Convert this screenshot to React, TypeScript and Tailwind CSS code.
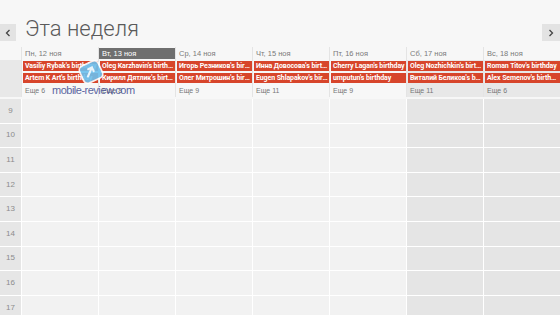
const days = [
  { label: 'Пн, 12 ноя', events: ["Vasiliy Rybak's birthday", "Artem K Art's birthday"], more: 'Еще 6' },
  { label: 'Вт, 13 ноя', events: ["Oleg Karzhavin's birthday", "Кирилл Дятлик's birthday"], more: 'Еще 8', today: true },
  { label: 'Ср, 14 ноя', events: ["Игорь Резников's birthday", "Олег Митрошин's birthday"], more: 'Еще 9' },
  { label: 'Чт, 15 ноя', events: ["Инна Довосова's birthday", "Eugen Shlapakov's birthday"], more: 'Еще 11' },
  { label: 'Пт, 16 ноя', events: ["Cherry Lagan's birthday", "umputun's birthday"], more: 'Еще 9' },
  { label: 'Сб, 17 ноя', events: ["Oleg Nozhichkin's birthday", "Виталий Беликов's birthday"], more: 'Еще 11', weekend: true },
  { label: 'Вс, 18 ноя', events: ["Roman Titov's birthday", "Alex Semenov's birthday"], more: 'Еще 6', weekend: true },
]

const hours = [9, 10, 11, 12, 13, 14, 15, 16, 17]

const sans = "font-['Liberation_Sans',Arial,sans-serif]"

export default function App() {
  return (
    <div className={`relative w-[560px] h-[315px] overflow-hidden bg-[#f7f7f7] ${sans}`}>
      {/* title bar */}
      <div className="h-[47px] flex items-start">
        <button className="mt-[24px] w-[16px] h-[17px] bg-[#e3e3e3] flex items-center justify-center">
          <svg width="6" height="8" viewBox="0 0 6 8">
            <polyline points="4.5,1 1.5,4 4.5,7" fill="none" stroke="#444" strokeWidth="1.3" />
          </svg>
        </button>
        <h1 className="ml-[9px] mt-[15px] text-[22px] leading-[28px] font-light text-[#5a5a5a] font-['Roboto','Open_Sans',sans-serif]">
          Эта неделя
        </h1>
        <button className="ml-auto mt-[24px] w-[18px] h-[17px] bg-[#e3e3e3] flex items-center justify-center">
          <svg width="6" height="8" viewBox="0 0 6 8">
            <polyline points="1.5,1 4.5,4 1.5,7" fill="none" stroke="#444" strokeWidth="1.3" />
          </svg>
        </button>
      </div>

      {/* day headers + all-day events */}
      <div className="grid grid-cols-[21px_repeat(7,minmax(0,1fr))] gap-x-px bg-[#e4e4e4]">
        <div className="h-[13px] bg-[#f7f7f7]" />
        {days.map((d) => (
          <div key={d.label} className="h-[13px] bg-[#f7f7f7] pt-px">
            <div
              className={`h-[11px] pl-[3px] text-[7.5px] leading-[11px] whitespace-nowrap ${
                d.today ? 'bg-[#6f6f6f] text-white' : 'text-[#7a7a7a]'
              }`}
            >
              {d.label}
            </div>
          </div>
        ))}

        <div className="h-[37px] bg-[#e8e8e8]" />
        {days.map((d) => (
          <div
            key={d.label + 'e'}
            className={`h-[37px] min-w-0 pt-px pl-px flex flex-col gap-[2px] ${d.weekend ? 'bg-[#e8e8e8]' : 'bg-[#f7f7f7]'}`}
          >
            {d.events.map((e) => (
              <div
                key={e}
                className="h-[11px] bg-[#d7452b] text-white font-bold text-[7px] tracking-[-0.1px] leading-[11px] pl-[2px] pr-px truncate font-['Roboto',Arial,sans-serif]"
              >
                {e}
              </div>
            ))}
            <div className="pl-[2px] text-[7px] leading-[12px] text-[#777] whitespace-nowrap">{d.more}</div>
          </div>
        ))}
      </div>

      {/* hour grid */}
      <div className="mt-[2px] grid grid-cols-[21px_repeat(7,minmax(0,1fr))] gap-px bg-white">
        {hours.map((h) => (
          <div key={h} className="contents">
            <div className="h-[23.6px] bg-[#e6e6e6] flex items-center justify-center text-[8px] text-[#8c8c8c]">
              {h}
            </div>
            {days.map((d) => (
              <div key={d.label + h} className={`h-[23.6px] ${d.weekend ? 'bg-[#e5e5e5]' : 'bg-[#f2f2f2]'}`} />
            ))}
          </div>
        ))}
      </div>

      {/* watermark */}
      <svg width="28" height="28" viewBox="0 0 30 30" className="absolute left-[77px] top-[58px] pointer-events-none">
        <g transform="rotate(-25 15 15)">
          <rect x="4" y="5" width="22" height="20" rx="5" fill="#6cc0ee" stroke="#ffffff" strokeWidth="1.8" opacity="0.9" />
          <path d="M10 18 L18 11 M13.5 11 L18 11 L18 15.5" fill="none" stroke="#e8f4fb" strokeWidth="2.2" strokeLinecap="round" />
        </g>
      </svg>
      <div className="absolute left-[52px] top-[84px] whitespace-nowrap text-[11px] leading-[12px] text-[#3f4d93] opacity-85 tracking-[-0.5px] pointer-events-none">
        mobile-review.com
      </div>
    </div>
  )
}
